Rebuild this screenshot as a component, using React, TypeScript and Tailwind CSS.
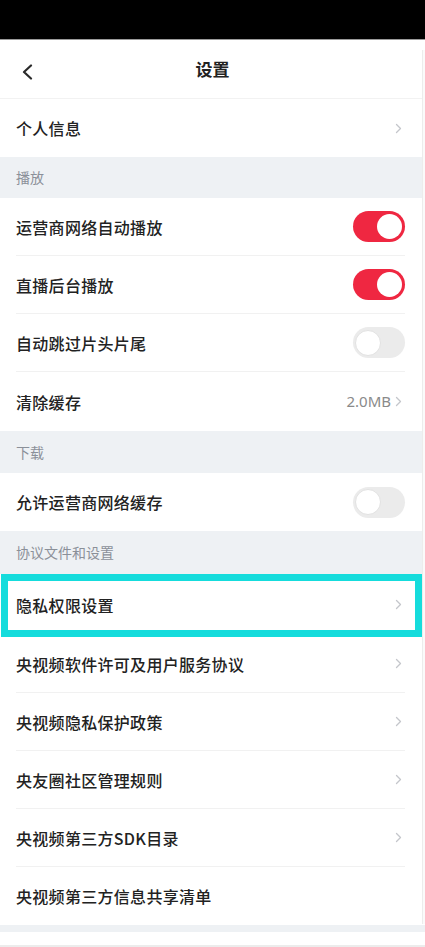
import React from "react";

const font = { fontFamily: '"Noto Sans CJK SC", "Noto Sans", sans-serif' };

function Chevron() {
  return (
    <svg width="7" height="11" viewBox="0 0 7 11" fill="none" className="shrink-0 mr-[3px]">
      <path d="M1.5 1.5 L5.5 5.5 L1.5 9.5" stroke="#c4c6cb" strokeWidth="1.3" strokeLinecap="round" strokeLinejoin="round" />
    </svg>
  );
}

function Toggle({ on }: { on: boolean }) {
  return on ? (
    <div className="w-[52px] h-[31px] rounded-full bg-[#ef2741] flex items-center justify-end pr-[3px]">
      <div className="w-[25px] h-[25px] rounded-full bg-white" />
    </div>
  ) : (
    <div className="w-[52px] h-[31px] rounded-full bg-[#ebebeb] flex items-center pl-[2px]">
      <div className="w-[26px] h-[26px] rounded-full bg-white border border-[#e2e2e2]" />
    </div>
  );
}

function Row({
  label,
  right,
  divider = true,
  h = "h-[58px]",
}: {
  label: string;
  right?: React.ReactNode;
  divider?: boolean;
  h?: string;
}) {
  return (
    <div className={`bg-white ${h} pl-4 pr-[20px]`}>
      <div className={`h-full flex items-center justify-between ${divider ? "border-b border-[#f1f1f1]" : ""}`}>
        <span className="text-[16px] font-medium text-[#222222] tracking-[0.3px]">{label}</span>
        {right}
      </div>
    </div>
  );
}

function Section({ title, h = "h-[42px]" }: { title: string; h?: string }) {
  return (
    <div className={`${h} bg-[#eef1f4] pl-4 flex items-center`}>
      <span className="text-[14px] text-[#8b9099]">{title}</span>
    </div>
  );
}

export default function App() {
  return (
    <div className="w-[425px] h-[947px] bg-white overflow-hidden relative" style={font}>
      <div className="h-[40px] bg-black border-b border-[#9a9a9a]" />
      <div className="h-[59px] bg-white border-b border-[#f2f2f2] relative flex items-center justify-center">
        <svg className="absolute left-[21px] top-[24px]" width="14" height="16" viewBox="0 0 14 16" fill="none">
          <path d="M10 1.5 L3 8 L10 14.5" stroke="#2a2a2a" strokeWidth="2.2" strokeLinecap="round" strokeLinejoin="round" />
        </svg>
        <span className="text-[17px] font-bold text-[#222222]">设置</span>
      </div>
      <Row label="个人信息" right={<Chevron />} divider={false} />
      <Section title="播放" h="h-[41px]" />
      <Row label="运营商网络自动播放" right={<Toggle on />} />
      <Row label="直播后台播放" right={<Toggle on />} />
      <Row label="自动跳过片头片尾" right={<Toggle on={false} />} />
      <Row
        label="清除缓存"
        divider={false}
        h="h-[59px]"
        right={
          <div className="flex items-center gap-[4px]">
            <span className="text-[15px] text-[#8a8a8a]" style={{ fontFamily: '"Noto Sans", sans-serif' }}>2.0MB</span>
            <Chevron />
          </div>
        }
      />
      <Section title="下载" />
      <Row label="允许运营商网络缓存" right={<Toggle on={false} />} divider={false} />
      <Section title="协议文件和设置" h="h-[43px]" />
      <div className="relative">
        <Row label="隐私权限设置" right={<Chevron />} divider={false} h="h-[61px]" />
        <div className="absolute left-[1px] right-[3px] top-0 bottom-[-2px] border-[7px] border-[#15dcdc] pointer-events-none" />
      </div>
      <Row label="央视频软件许可及用户服务协议" right={<Chevron />} />
      <Row label="央视频隐私保护政策" right={<Chevron />} />
      <Row label="央友圈社区管理规则" right={<Chevron />} />
      <Row label="央视频第三方SDK目录" right={<Chevron />} />
      <Row label="央视频第三方信息共享清单" divider={false} />
      <div className="h-[7px] bg-[#eef1f4]" />
      <div className="h-[13px] bg-white" />
      <div className="h-[3px] bg-[#ececec]" />
      <div className="absolute right-0 top-[50px] h-[874px] w-[3px] border-l border-[#ececec] bg-[#fafafa]" />
    </div>
  );
}
